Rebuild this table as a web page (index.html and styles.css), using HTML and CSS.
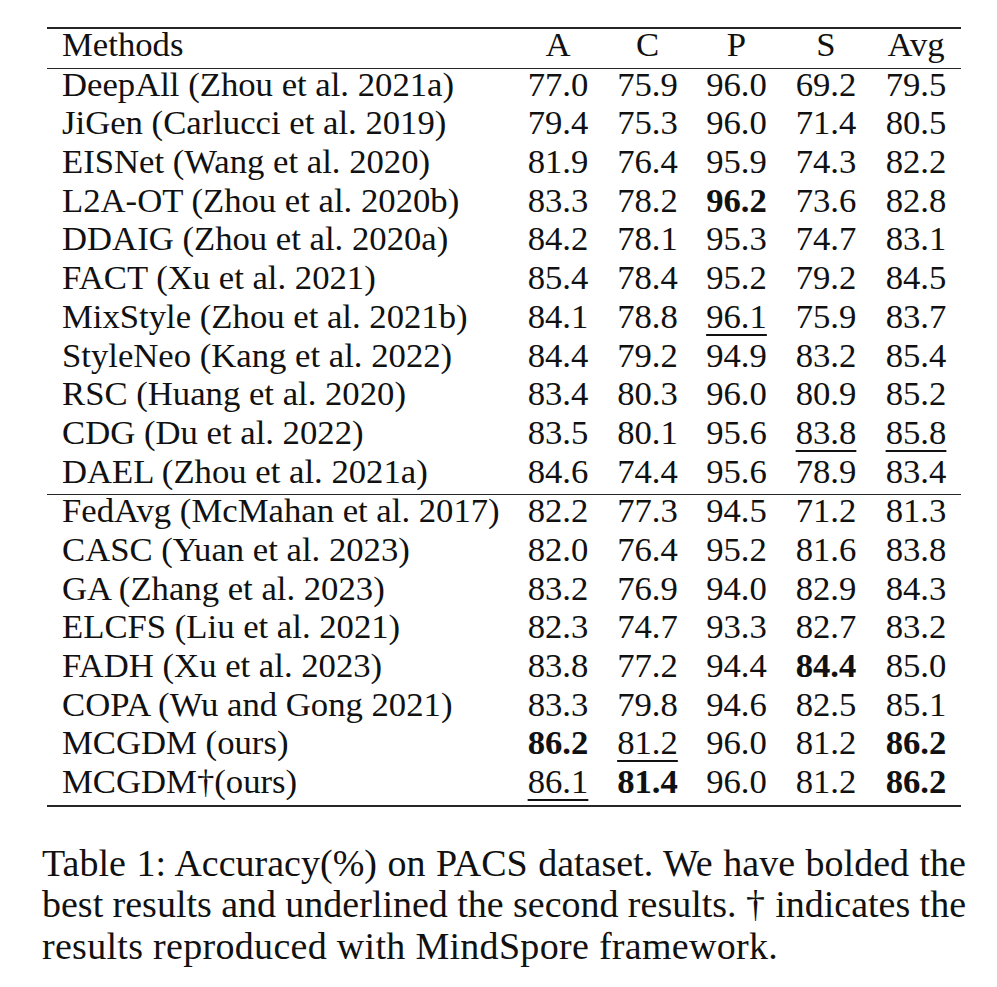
FILE: index.html
```html
<!DOCTYPE html>
<html>
<head>
<meta charset="utf-8">
<link rel="stylesheet" href="styles.css">
</head>
<body>
<div class="page">
  <table class="results">
    <colgroup>
      <col class="c-method">
      <col class="c-a">
      <col class="c-c">
      <col class="c-p">
      <col class="c-s">
      <col class="c-avg">
    </colgroup>
    <thead>
      <tr class="head"><th class="m">Methods</th><th>A</th><th>C</th><th>P</th><th>S</th><th>Avg</th></tr>
    </thead>
    <tbody>
      <tr><td class="m">DeepAll (Zhou et al. 2021a)</td><td>77.0</td><td>75.9</td><td>96.0</td><td>69.2</td><td>79.5</td></tr>
      <tr><td class="m">JiGen (Carlucci et al. 2019)</td><td>79.4</td><td>75.3</td><td>96.0</td><td>71.4</td><td>80.5</td></tr>
      <tr><td class="m">EISNet (Wang et al. 2020)</td><td>81.9</td><td>76.4</td><td>95.9</td><td>74.3</td><td>82.2</td></tr>
      <tr><td class="m">L2A-OT (Zhou et al. 2020b)</td><td>83.3</td><td>78.2</td><td><b>96.2</b></td><td>73.6</td><td>82.8</td></tr>
      <tr><td class="m">DDAIG (Zhou et al. 2020a)</td><td>84.2</td><td>78.1</td><td>95.3</td><td>74.7</td><td>83.1</td></tr>
      <tr><td class="m">FACT (Xu et al. 2021)</td><td>85.4</td><td>78.4</td><td>95.2</td><td>79.2</td><td>84.5</td></tr>
      <tr><td class="m">MixStyle (Zhou et al. 2021b)</td><td>84.1</td><td>78.8</td><td><u>96.1</u></td><td>75.9</td><td>83.7</td></tr>
      <tr><td class="m">StyleNeo (Kang et al. 2022)</td><td>84.4</td><td>79.2</td><td>94.9</td><td>83.2</td><td>85.4</td></tr>
      <tr><td class="m">RSC (Huang et al. 2020)</td><td>83.4</td><td>80.3</td><td>96.0</td><td>80.9</td><td>85.2</td></tr>
      <tr><td class="m">CDG (Du et al. 2022)</td><td>83.5</td><td>80.1</td><td>95.6</td><td><u>83.8</u></td><td><u>85.8</u></td></tr>
      <tr><td class="m">DAEL (Zhou et al. 2021a)</td><td>84.6</td><td>74.4</td><td>95.6</td><td>78.9</td><td>83.4</td></tr>
      <tr class="group"><td class="m">FedAvg (McMahan et al. 2017)</td><td>82.2</td><td>77.3</td><td>94.5</td><td>71.2</td><td>81.3</td></tr>
      <tr><td class="m">CASC (Yuan et al. 2023)</td><td>82.0</td><td>76.4</td><td>95.2</td><td>81.6</td><td>83.8</td></tr>
      <tr><td class="m">GA (Zhang et al. 2023)</td><td>83.2</td><td>76.9</td><td>94.0</td><td>82.9</td><td>84.3</td></tr>
      <tr><td class="m">ELCFS (Liu et al. 2021)</td><td>82.3</td><td>74.7</td><td>93.3</td><td>82.7</td><td>83.2</td></tr>
      <tr><td class="m">FADH (Xu et al. 2023)</td><td>83.8</td><td>77.2</td><td>94.4</td><td><b>84.4</b></td><td>85.0</td></tr>
      <tr><td class="m">COPA (Wu and Gong 2021)</td><td>83.3</td><td>79.8</td><td>94.6</td><td>82.5</td><td>85.1</td></tr>
      <tr><td class="m">MCGDM (ours)</td><td><b>86.2</b></td><td><u>81.2</u></td><td>96.0</td><td>81.2</td><td><b>86.2</b></td></tr>
      <tr><td class="m">MCGDM†(ours)</td><td><u>86.1</u></td><td><b>81.4</b></td><td>96.0</td><td>81.2</td><td><b>86.2</b></td></tr>
    </tbody>
  </table>
  <div class="caption">
    <div class="line just">Table 1: Accuracy(%) on PACS dataset. We have bolded the</div>
    <div class="line just">best results and underlined the second results. † indicates the</div>
    <div class="line last">results reproduced with MindSpore framework.</div>
  </div>
</div>
</body>
</html>
```

FILE: styles.css
```css
html, body {
  margin: 0;
  padding: 0;
  background: #ffffff;
}

body {
  font-family: "Liberation Serif", "Times New Roman", serif;
  color: #111111;
}

.page {
  width: 997px;
  height: 987px;
  overflow: hidden;
  padding-top: 27px;
  box-sizing: border-box;
}

.results {
  margin-left: 47px;
  width: 914px;
  table-layout: fixed;
  border-collapse: collapse;
  border-top: 2px solid #262626;
  border-bottom: 2px solid #262626;
  font-size: 34.7px;
}

.c-method { width: 466px; }
.c-a { width: 90px; }
.c-c { width: 89px; }
.c-p { width: 89px; }
.c-s { width: 90px; }
.c-avg { width: 90px; }

.results th,
.results td {
  padding: 0 0 7.7px 0;
  line-height: 31px;
  font-weight: normal;
  text-align: center;
  white-space: nowrap;
}

.results .m {
  text-align: left;
  padding-left: 15px;
}

.results .head th {
  border-bottom: 1px solid #262626;
}

.results .group td {
  border-top: 1px solid #262626;
}

.results b {
  font-weight: bold;
}

.results u {
  text-decoration: underline;
  text-decoration-thickness: 2px;
  text-underline-offset: 6px;
}

.caption {
  margin-top: 36px;
  margin-left: 42px;
  width: 924px;
  font-size: 38px;
  line-height: 41.5px;
  word-spacing: -1px;
}

.caption .line {
  white-space: nowrap;
}

.caption .just {
  text-align: justify;
  text-align-last: justify;
}

.caption .last {
  word-spacing: 0;
  letter-spacing: 0.3px;
}
```
